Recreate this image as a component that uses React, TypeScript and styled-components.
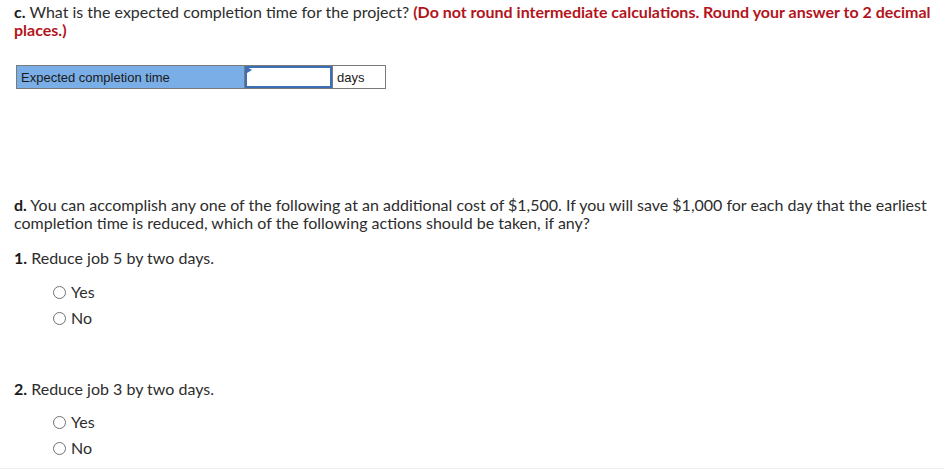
import React from "react";
import styled, { createGlobalStyle } from "styled-components";

const GlobalStyle = createGlobalStyle`
  html, body {
    margin: 0;
    padding: 0;
    background: #fff;
  }
  body {
    font-family: Lato, "Open Sans", sans-serif;
    color: #2d2d2d;
  }
`;

const Page = styled.div`
  width: 944px;
  height: 469px;
  box-sizing: border-box;
  padding: 3px 0 0 14px;
  border-bottom: 1px solid #eeeeee;
  overflow: hidden;
`;

const Paragraph = styled.p<{ $top?: number }>`
  margin: ${(p) => p.$top ?? 0}px 0 0 0;
  font-size: 16px;
  line-height: 18px;
`;

const Label = styled.b`
  font-weight: 700;
  color: #1a1a1a;
`;

const Warning = styled.b`
  font-weight: 700;
  color: #b3141c;
`;

const AnswerTable = styled.div`
  display: grid;
  grid-template-columns: 228px 87px 55px;
  width: 370px;
  height: 24px;
  margin: 26px 0 0 2px;
  box-sizing: border-box;
  border: 1px solid #7b7b7b;
  font-family: "Liberation Sans", Arial, sans-serif;
  font-size: 13px;
  color: #1a1a1a;
`;

const HeadCell = styled.div`
  background: #7aaee6;
  border-right: 1px solid #7b7b7b;
  display: flex;
  align-items: center;
  padding-left: 4px;
`;

const InputCell = styled.div`
  position: relative;
  border: 2px solid #3b6fb6;
  background: #fff;
`;

/* little flag in the top-left corner of the answer box */
const Marker = styled.span`
  position: absolute;
  left: 0;
  top: -1px;
  width: 0;
  height: 0;
  border-top: 3px solid transparent;
  border-bottom: 3px solid transparent;
  border-left: 5px solid #3b6fb6;
`;

const UnitCell = styled.div`
  display: flex;
  align-items: center;
  padding-left: 4px;
  border-left: 1px solid #7b7b7b;
`;

const Options = styled.div<{ $top: number }>`
  display: flex;
  flex-direction: column;
  gap: 8px;
  margin: ${(p) => p.$top}px 0 0 39px;
`;

const Option = styled.label`
  display: flex;
  align-items: center;
  gap: 5px;
  font-size: 16px;
  line-height: 18px;
`;

const Radio = styled.span`
  width: 11px;
  height: 11px;
  border-radius: 50%;
  border: 1px solid #707070;
  background: #fff;
`;

function Choices({ top }: { top: number }) {
  return (
    <Options $top={top}>
      <Option>
        <Radio />
        Yes
      </Option>
      <Option>
        <Radio />
        No
      </Option>
    </Options>
  );
}

export default function App() {
  return (
    <>
      <GlobalStyle />
      <Page>
        <Paragraph>
          <Label>c.</Label> What is the expected completion time for the project?{" "}
          <Warning>
            (Do not round intermediate calculations. Round your answer to 2
            decimal places.)
          </Warning>
        </Paragraph>
        <AnswerTable>
          <HeadCell>Expected completion time</HeadCell>
          <InputCell>
            <Marker />
          </InputCell>
          <UnitCell>days</UnitCell>
        </AnswerTable>
        <Paragraph $top={107}>
          <Label>d.</Label> You can accomplish any one of the following at an
          additional cost of $1,500. If you will save $1,000 for each day that
          the earliest completion time is reduced, which of the following
          actions should be taken, if any?
        </Paragraph>
        <Paragraph $top={17}>
          <Label>1.</Label> Reduce job 5 by two days.
        </Paragraph>
        <Choices top={16} />
        <Paragraph $top={53}>
          <Label>2.</Label> Reduce job 3 by two days.
        </Paragraph>
        <Choices top={15} />
      </Page>
    </>
  );
}
